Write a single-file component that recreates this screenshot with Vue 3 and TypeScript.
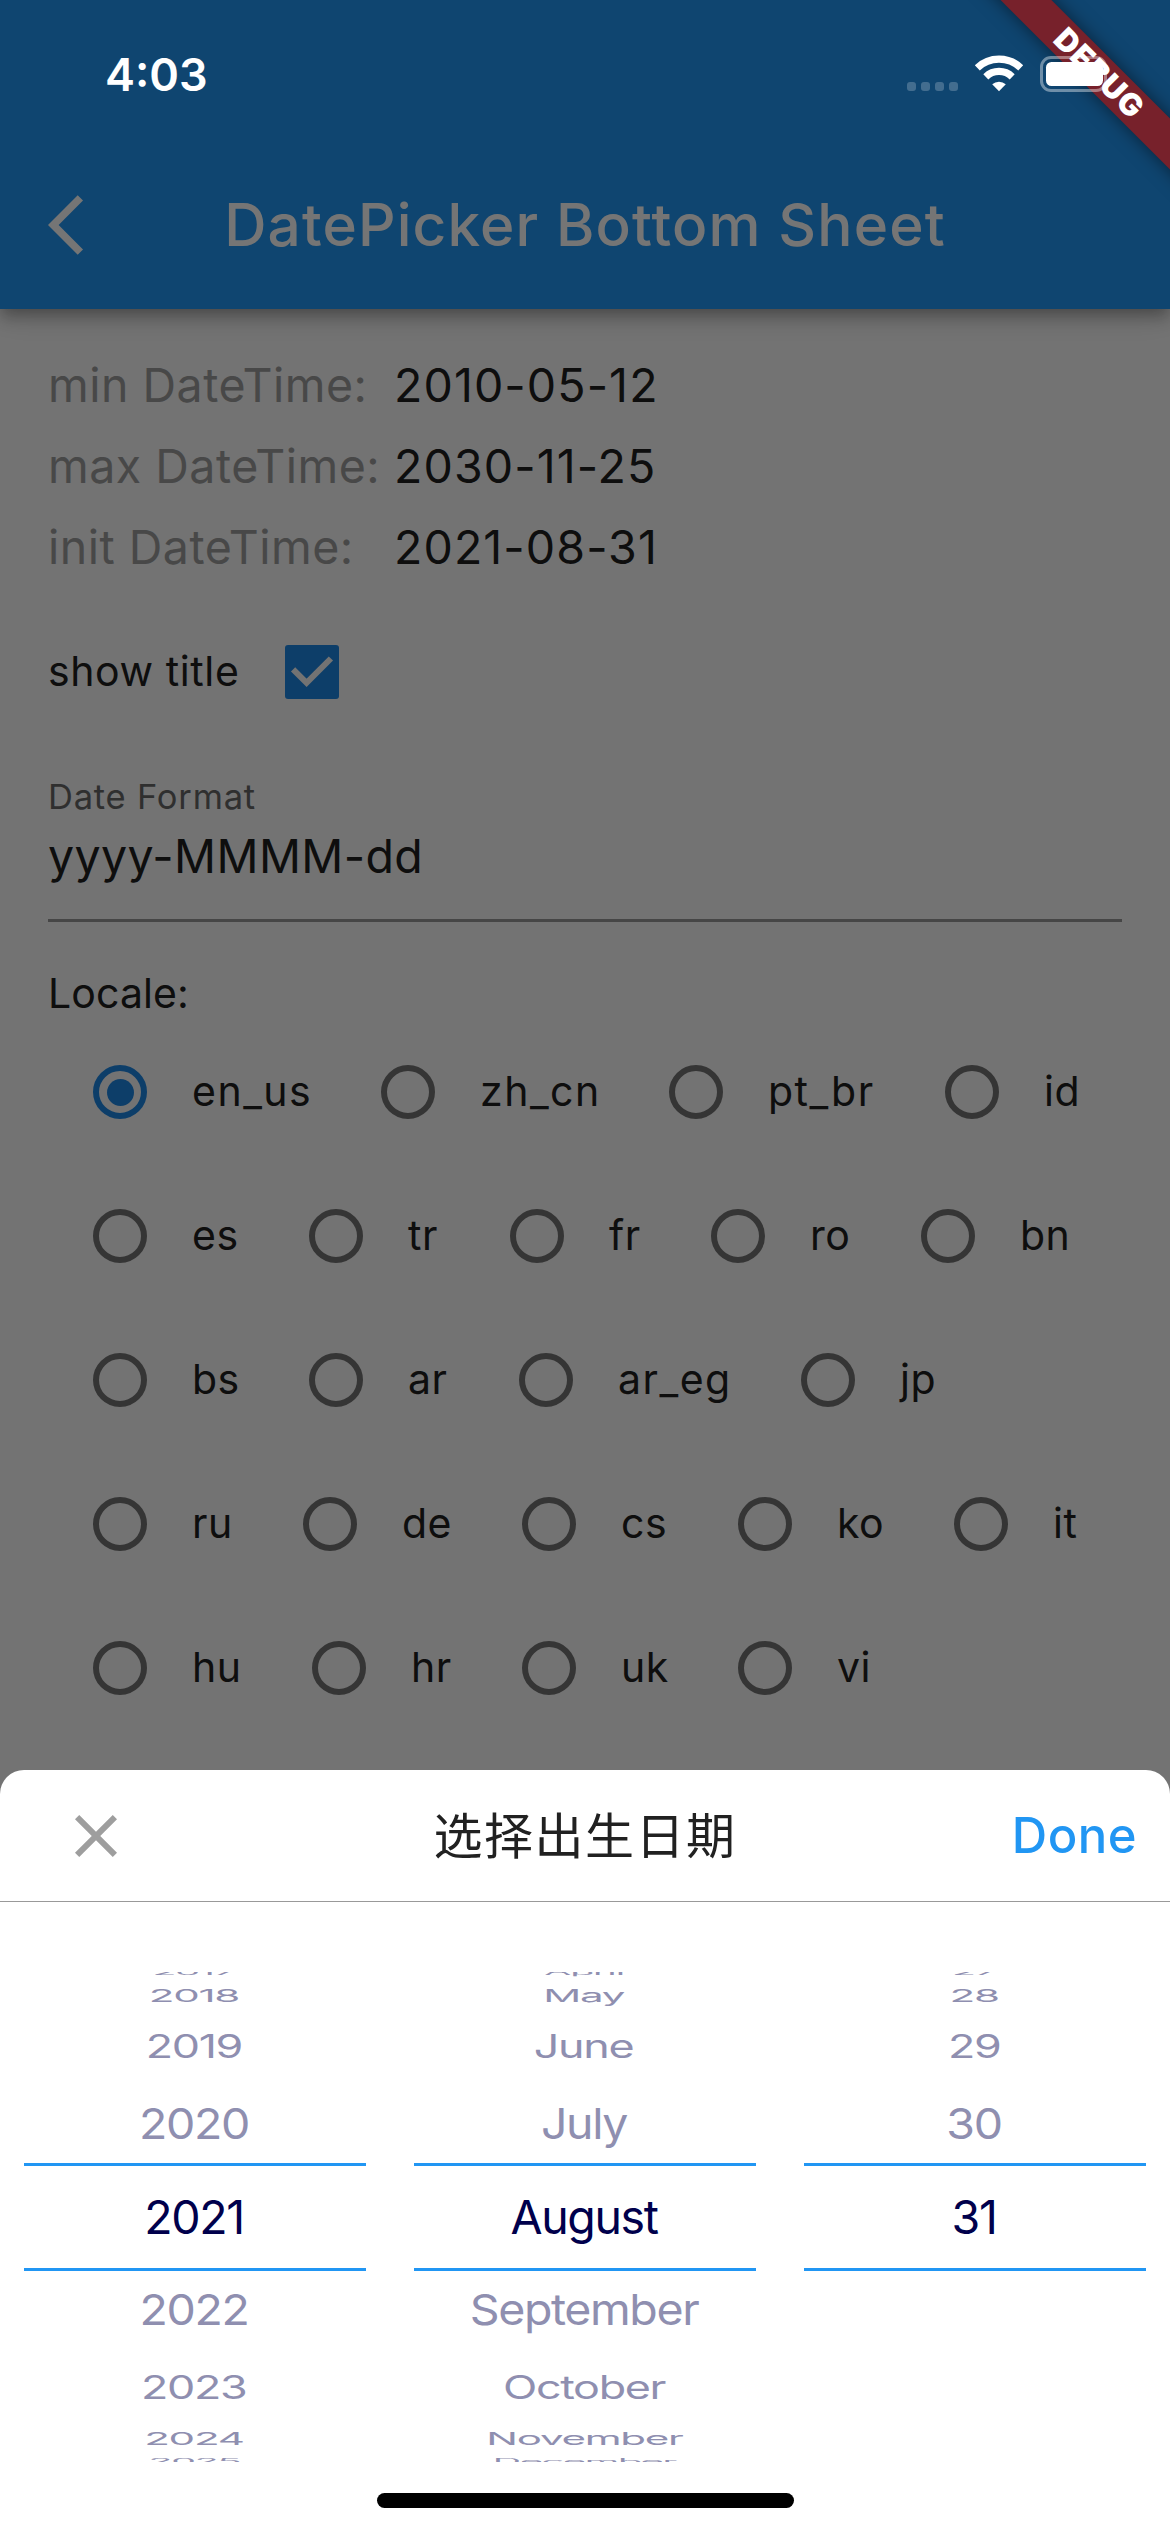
<script setup lang="ts">
interface LocaleOption {
  code: string
  width: number
}

const dates = [
  { label: 'min DateTime:', value: '2010-05-12' },
  { label: 'max DateTime:', value: '2030-11-25' },
  { label: 'init DateTime:', value: '2021-08-31' },
]

const selectedLocale = 'en_us'

const localeRows: LocaleOption[][] = [
  [
    { code: 'en_us', width: 288 },
    { code: 'zh_cn', width: 288 },
    { code: 'pt_br', width: 276 },
    { code: 'id', width: 200 },
  ],
  [
    { code: 'es', width: 216 },
    { code: 'tr', width: 201 },
    { code: 'fr', width: 201 },
    { code: 'ro', width: 210 },
    { code: 'bn', width: 200 },
  ],
  [
    { code: 'bs', width: 216 },
    { code: 'ar', width: 210 },
    { code: 'ar_eg', width: 282 },
    { code: 'jp', width: 200 },
  ],
  [
    { code: 'ru', width: 210 },
    { code: 'de', width: 219 },
    { code: 'cs', width: 216 },
    { code: 'ko', width: 216 },
    { code: 'it', width: 200 },
  ],
  [
    { code: 'hu', width: 219 },
    { code: 'hr', width: 210 },
    { code: 'uk', width: 216 },
    { code: 'vi', width: 200 },
  ],
]

// Each wheel lists the nine visible slots; index 4 is the selected one.
const wheels: string[][] = [
  ['2017', '2018', '2019', '2020', '2021', '2022', '2023', '2024', '2025'],
  ['April', 'May', 'June', 'July', 'August', 'September', 'October', 'November', 'December'],
  ['27', '28', '29', '30', '31', '', '', '', ''],
]

const slotClass = (i: number): string => `d${Math.abs(i - 4)}`
</script>

<template>
  <div class="screen">
    <header class="appbar">
      <svg class="back" viewBox="0 0 24 24">
        <path d="M11.67 3.87L9.9 2.1 0 12l9.9 9.9 1.77-1.77L3.54 12z" />
      </svg>
      <h1 class="title">DatePicker Bottom Sheet</h1>
    </header>

    <main class="content">
      <div v-for="d in dates" :key="d.label" class="date-row">
        <span class="date-label">{{ d.label }}</span>
        <span class="date-value">{{ d.value }}</span>
      </div>

      <div class="check-row">
        <span class="check-label">show title</span>
        <svg class="checkbox" viewBox="0 0 54 54">
          <rect width="54" height="54" rx="3" />
          <path d="M8.1 24.3L21.6 37.8L45.9 13.5" />
        </svg>
      </div>

      <div class="field">
        <span class="field-label">Date Format</span>
        <span class="field-value">yyyy-MMMM-dd</span>
      </div>

      <div class="locale-title">Locale:</div>
      <div v-for="(row, r) in localeRows" :key="r" class="locale-row">
        <div
          v-for="o in row"
          :key="o.code"
          class="option"
          :class="{ on: o.code === selectedLocale }"
          :style="{ width: o.width + 'px' }"
        >
          <span class="radio"><i></i></span>
          <span class="code" :class="{ long: o.code.includes('_') }">{{ o.code }}</span>
        </div>
      </div>
    </main>

    <div class="scrim"></div>

    <section class="sheet">
      <div class="sheet-head">
        <svg class="close" viewBox="0 0 24 24">
          <path d="M19 6.41L17.59 5 12 10.59 6.41 5 5 6.41 10.59 12 5 17.59 6.41 19 12 13.41 17.59 19 19 17.59 13.41 12z" />
        </svg>
        <span class="sheet-title">选择出生日期</span>
        <span class="done">Done</span>
      </div>
      <div class="wheels">
        <div v-for="(wheel, w) in wheels" :key="w" class="wheel">
          <div v-for="(text, i) in wheel" :key="i" class="slot" :class="slotClass(i)">
            <span>{{ text }}</span>
          </div>
          <div class="band"></div>
        </div>
      </div>
      <div class="home"></div>
    </section>

    <div class="corner"><div class="ribbon">DEBUG</div></div>

    <div class="status">
      <span class="clock">4:03</span>
      <svg class="status-icons" viewBox="0 0 210 42">
        <g fill="#fff" fill-opacity="0.22">
          <rect x="7" y="29" width="9" height="9" rx="3" />
          <rect x="21" y="29" width="9" height="9" rx="3" />
          <rect x="35" y="29" width="9" height="9" rx="3" />
          <rect x="49" y="29" width="9" height="9" rx="3" />
        </g>
        <g fill="none" stroke="#fff" stroke-width="7.2">
          <path d="M77.3 14.8A31.5 31.5 0 0 1 120.7 14.8" />
          <path d="M85.8 23.8A19 19 0 0 1 112.2 23.8" />
        </g>
        <path d="M92.2 31.2A10.5 10.5 0 0 1 105.8 31.2L99 38.2Z" fill="#fff" />
        <rect x="141.5" y="4.5" width="64" height="33" rx="9.5" fill="none" stroke="#fff" stroke-opacity="0.4" stroke-width="3" />
        <rect x="146" y="9" width="57" height="24" rx="5.5" fill="#fff" />
      </svg>
    </div>
  </div>
</template>

<style>
body {
  margin: 0;
}
</style>

<style scoped>
.screen {
  position: relative;
  width: 1170px;
  height: 2532px;
  overflow: hidden;
  background: #fafafa;
  color: #202020;
  font-family: Inter, "Noto Sans CJK SC", sans-serif;
  font-size: 41px;
  white-space: nowrap;
}
.appbar {
  position: relative;
  display: flex;
  align-items: center;
  box-sizing: border-box;
  height: 309px;
  padding: 141px 48px 0;
  background: #2196f3;
  box-shadow: 0 6px 12px -3px rgba(0, 0, 0, 0.2), 0 12px 15px rgba(0, 0, 0, 0.14),
    0 3px 30px rgba(0, 0, 0, 0.12);
}
.back {
  width: 72px;
  height: 72px;
  fill: #fff;
}
.title {
  flex: 1;
  margin: 0 72px 0 0;
  text-align: center;
  color: #fff;
  font-size: 58.5px;
  font-weight: 500;
  line-height: 80px;
  letter-spacing: 1.15px;
}
.content {
  display: flex;
  flex-direction: column;
  padding: 36px 48px 0;
}
.date-row {
  display: flex;
  height: 81px;
  line-height: 81px;
  font-size: 46.5px;
}
.date-label {
  width: 346px;
  color: #9e9e9e;
  letter-spacing: 0.5px;
}
.date-value {
  letter-spacing: 1.1px;
}
.check-row {
  display: flex;
  align-items: center;
  height: 144px;
  margin-top: 12px;
}
.check-label {
  width: 237px;
  padding-bottom: 2px;
  letter-spacing: 0.6px;
}
.checkbox {
  width: 54px;
  height: 54px;
}
.checkbox rect {
  fill: #1e88e5;
}
.checkbox path {
  fill: none;
  stroke: #fafafa;
  stroke-width: 6;
}
.field {
  display: flex;
  flex-direction: column;
  padding: 24px 0 32px;
  border-bottom: 3px solid #9a9a9a;
}
.field-label {
  line-height: 57px;
  font-size: 34.5px;
  color: #686868;
  letter-spacing: 0.8px;
}
.field-value {
  line-height: 62px;
  font-size: 46.5px;
  letter-spacing: 0.4px;
}
.locale-title {
  height: 54px;
  margin-top: 44px;
  line-height: 54px;
  letter-spacing: 0.1px;
}
.locale-row {
  display: flex;
  height: 144px;
}
.option {
  display: flex;
  flex: none;
  align-items: center;
}
.radio {
  display: flex;
  flex: none;
  align-items: center;
  justify-content: center;
  box-sizing: border-box;
  width: 54px;
  height: 54px;
  margin: 0 45px;
  border: 6px solid #747474;
  border-radius: 50%;
}
.on .radio {
  border-color: #1e88e5;
}
.on .radio i {
  width: 27px;
  height: 27px;
  border-radius: 50%;
  background: #1e88e5;
}
.code {
  padding-bottom: 2px;
  line-height: 60px;
  letter-spacing: 0.5px;
}
.code.long {
  letter-spacing: 1.5px;
}
.scrim {
  position: absolute;
  inset: 0;
  background: rgba(0, 0, 0, 0.54);
}
.sheet {
  position: absolute;
  left: 0;
  right: 0;
  bottom: 0;
  display: flex;
  flex-direction: column;
  align-items: center;
  height: 762px;
  border-radius: 24px 24px 0 0;
  background: #fff;
}
.sheet-head {
  display: grid;
  grid-template-columns: 1fr auto 1fr;
  align-items: center;
  box-sizing: border-box;
  width: 100%;
  height: 132px;
  padding: 0 33px 0 60px;
  border-bottom: 1px solid #999;
}
.close {
  width: 72px;
  height: 72px;
  fill: #9e9e9e;
}
.sheet-title {
  margin-left: -27px;
  padding-bottom: 6px;
  font-family: "Noto Sans CJK SC", sans-serif;
  font-size: 49px;
  line-height: 72px;
  letter-spacing: 1.5px;
  color: #212121;
}
.done {
  text-align: right;
  color: #2196f3;
  font-size: 49px;
  font-weight: 500;
  letter-spacing: 0.5px;
}
.wheels {
  display: flex;
  width: 100%;
  height: 490px;
  margin-top: 70px;
}
.wheel {
  position: relative;
  display: flex;
  flex: 1;
  flex-direction: column;
  align-items: center;
  justify-content: center;
  box-sizing: border-box;
  padding: 0 2px 2px 0;
  overflow: hidden;
  color: #8f8fb0;
  font-size: 46.5px;
  letter-spacing: -1.4px;
}
.slot {
  display: flex;
  flex: none;
  align-items: center;
  justify-content: center;
  box-sizing: border-box;
  height: 93px;
  line-height: 60px;
}
.slot span {
  display: block;
}
.d0 {
  padding-top: 2px;
  color: #00004c;
}
.d1 span {
  transform: scale(1, 0.925);
}
.d2 {
  height: 62px;
}
.d2 span {
  transform: scale(0.965, 0.69);
}
.d3 {
  height: 40px;
}
.d3 span {
  transform: scale(0.905, 0.385);
}
.d4 {
  height: 6px;
}
.d4 span {
  transform: scale(0.845, 0.15);
}
.band {
  position: absolute;
  left: 24px;
  right: 24px;
  top: 191px;
  height: 102px;
  border-top: 3px solid #2196f3;
  border-bottom: 3px solid #2196f3;
}
.home {
  width: 417px;
  height: 15px;
  margin-top: 31px;
  border-radius: 8px;
  background: #000;
}
.corner {
  position: absolute;
  top: 0;
  right: 0;
  width: 240px;
  height: 240px;
  overflow: hidden;
}
.ribbon {
  position: absolute;
  left: 18px;
  top: 54px;
  width: 300px;
  height: 36px;
  transform: rotate(45deg);
  background: #77212b;
  box-shadow: 0 0 18px rgba(0, 0, 0, 0.5);
  color: #fff;
  font-size: 31px;
  font-weight: 900;
  line-height: 36px;
  letter-spacing: 1px;
  text-indent: 4px;
  text-align: center;
}
.status {
  position: absolute;
  left: 0;
  right: 0;
  top: 0;
  display: flex;
  align-items: center;
  justify-content: space-between;
  height: 148px;
  padding: 0 60px 0 105px;
}
.clock {
  color: #fff;
  font-size: 45px;
  font-weight: 600;
}
.status-icons {
  width: 210px;
  height: 42px;
}
</style>
